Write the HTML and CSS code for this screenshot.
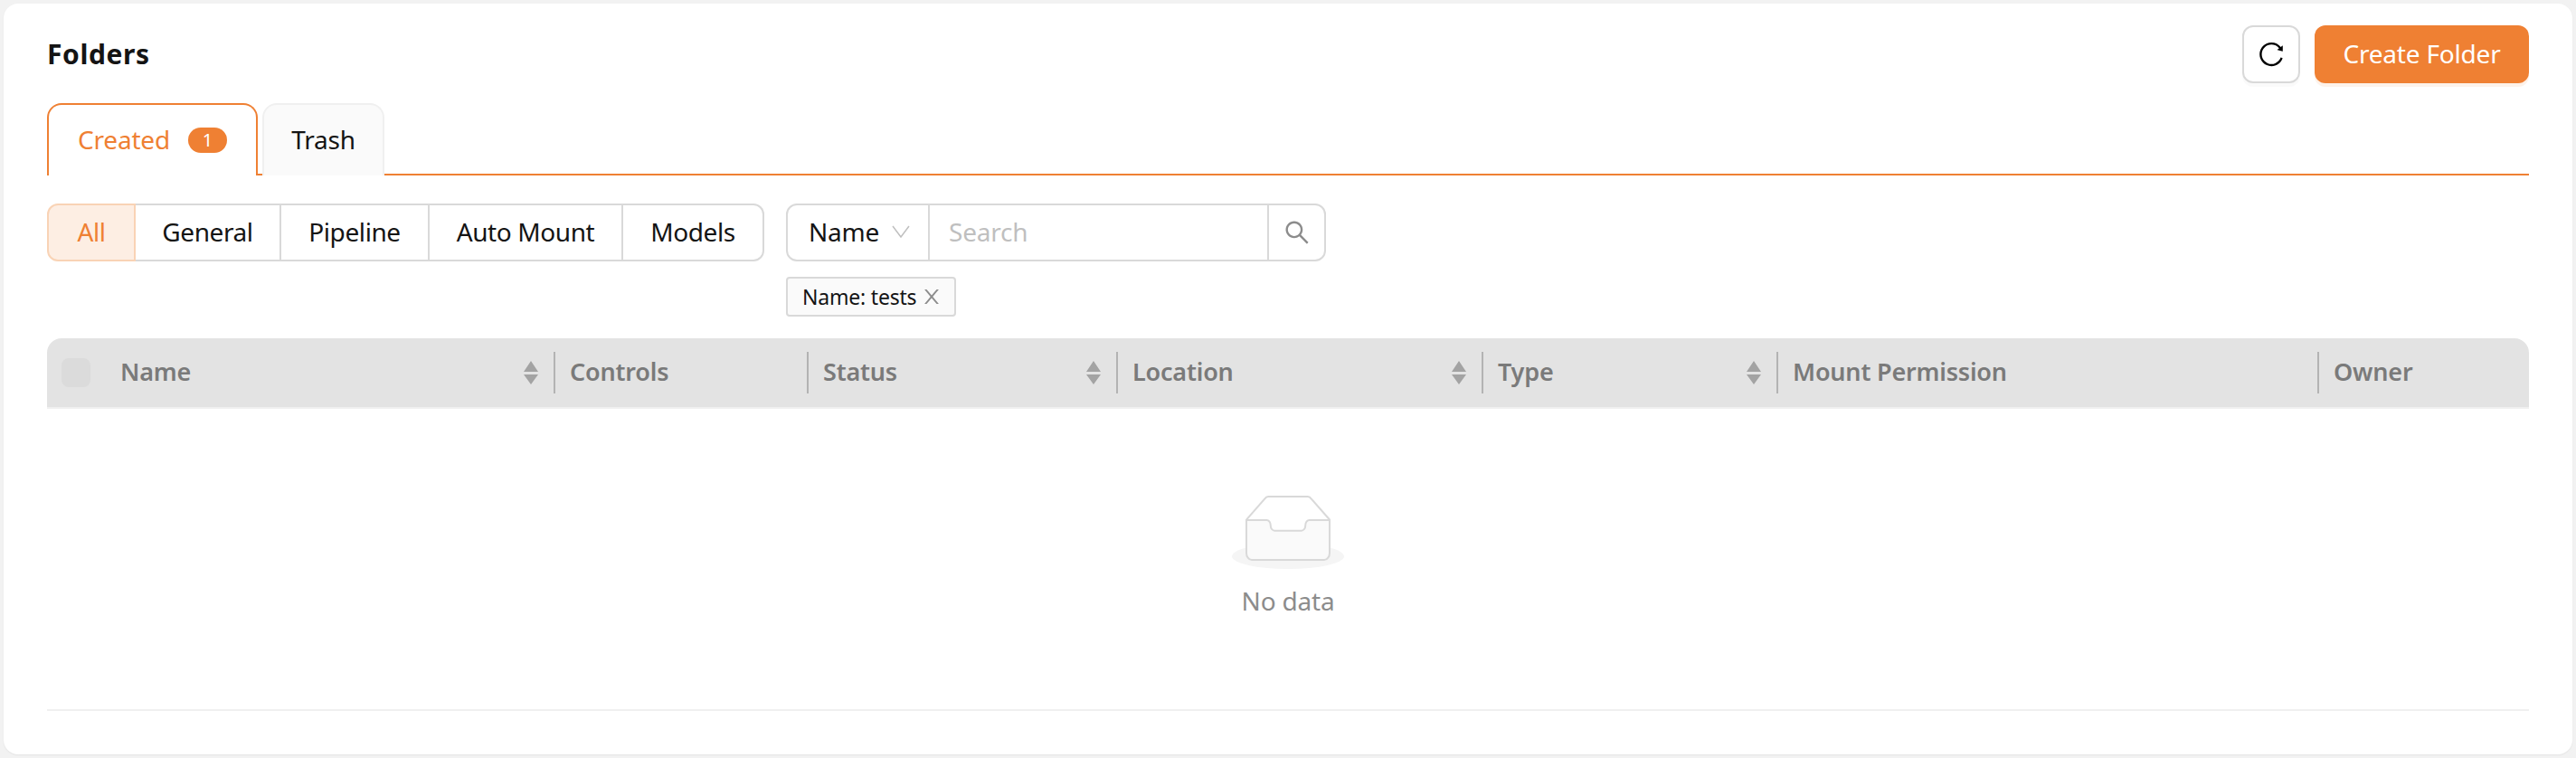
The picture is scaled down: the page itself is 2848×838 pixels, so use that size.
FILE: index.html
```html
<!DOCTYPE html>
<html lang="en">
<head>
  <meta charset="UTF-8">
  <title>Folders</title>
  <link rel="stylesheet" href="styles.css">
</head>
<body>
  <main class="card">
    <header class="top">
      <h1>Folders</h1>
      <div class="actions">
        <button class="btn-icon" type="button" aria-label="Refresh">
          <svg viewBox="64 64 896 896" width="28" height="28"><path d="M909.1 209.3l-56.4 44.1C775.8 155.1 656.2 92 521.9 92 290 92 102.3 279.5 102 511.5 101.7 743.7 289.8 932 521.9 932c181.3 0 335.8-115 394.6-276.1 1.5-4.2-.7-8.9-4.9-10.3l-56.7-19.5a8 8 0 0 0-10.1 4.8c-1.8 5-3.8 10-5.9 14.9-17.3 41-42.1 77.8-73.7 109.4A344.77 344.77 0 0 1 655.9 829c-42.3 17.9-87.4 27-133.8 27-46.5 0-91.5-9.1-133.8-27A341.5 341.5 0 0 1 279 755.2a342.16 342.16 0 0 1-73.7-109.4c-17.9-42.4-27-87.4-27-133.9s9.1-91.5 27-133.9c17.3-41 42.1-77.8 73.7-109.4 31.6-31.6 68.4-56.4 109.3-73.8 42.3-17.9 87.4-27 133.8-27 46.5 0 91.5 9.1 133.8 27a341.5 341.5 0 0 1 109.3 73.8c9.9 9.9 19.2 20.4 27.8 31.4l-60.2 47a8 8 0 0 0 3 14.1l175.6 43c5 1.2 9.9-2.6 9.9-7.7l.8-180.9c-.1-6.6-7.8-10.3-13-6.2z"/></svg>
        </button>
        <button class="btn-primary" type="button">Create Folder</button>
      </div>
    </header>

    <nav class="tabs">
      <a class="tab tab-active">Created <span class="badge">1</span></a>
      <a class="tab tab-trash">Trash</a>
    </nav>

    <section class="filters">
      <div class="segments">
        <span class="seg seg-all seg-active">All</span>
        <span class="seg seg-general">General</span>
        <span class="seg seg-pipeline">Pipeline</span>
        <span class="seg seg-mount">Auto Mount</span>
        <span class="seg seg-models">Models</span>
      </div>
      <div class="search-col">
        <div class="search">
          <div class="search-select">
            <span>Name</span>
            <svg viewBox="0 0 20 14" width="20" height="14"><path d="M1 1l9 12 9-12"/></svg>
          </div>
          <input class="search-input" type="text" placeholder="Search">
          <div class="search-btn">
            <svg viewBox="64 64 896 896" width="28" height="28"><path d="M909.6 854.5L649.9 594.8C690.2 542.7 712 479 712 412c0-80.2-31.3-155.4-87.9-212.1-56.6-56.7-132-87.9-212.1-87.9s-155.5 31.3-212.1 87.9C143.2 256.5 112 331.8 112 412c0 80.1 31.3 155.5 87.9 212.1C256.5 680.8 331.8 712 412 712c67 0 130.6-21.8 182.7-62l259.7 259.6a8.2 8.2 0 0 0 11.6 0l43.6-43.5a8.2 8.2 0 0 0 0-11.6zM570.4 570.4C528 612.7 471.8 636 412 636s-116-23.3-158.4-65.6C211.3 528 188 471.8 188 412s23.3-116.1 65.6-158.4C296 211.3 352.2 188 412 188s116.1 23.2 158.4 65.6S636 352.2 636 412s-23.3 116.1-65.6 158.4z"/></svg>
          </div>
        </div>
        <div class="tag">
          <span>Name: tests</span>
          <svg viewBox="64 64 896 896" width="22" height="22"><path d="M563.8 512l262.5-312.9c4.4-5.2.7-13.1-6.1-13.1h-79.8c-4.7 0-9.2 2.1-12.3 5.7L511.6 449.8 295.1 191.7c-3-3.6-7.5-5.7-12.3-5.7H203c-6.8 0-10.5 7.9-6.1 13.1L459.4 512 196.9 824.9A7.95 7.95 0 0 0 203 838h79.8c4.7 0 9.2-2.1 12.3-5.7l216.5-258.1 216.5 258.1c3 3.6 7.5 5.7 12.3 5.7h79.8c6.8 0 10.5-7.9 6.1-13.1L563.8 512z"/></svg>
        </div>
      </div>
    </section>

    <section class="table">
      <div class="thead">
        <div class="th-check"><span class="checkbox"></span></div>
        <div class="th">Name <svg class="sort" viewBox="0 0 18 26"><path d="M9 0l8 12H1zM9 26L1 15h16z"/></svg></div>
        <div class="th">Controls</div>
        <div class="th">Status <svg class="sort" viewBox="0 0 18 26"><path d="M9 0l8 12H1zM9 26L1 15h16z"/></svg></div>
        <div class="th">Location <svg class="sort" viewBox="0 0 18 26"><path d="M9 0l8 12H1zM9 26L1 15h16z"/></svg></div>
        <div class="th">Type <svg class="sort" viewBox="0 0 18 26"><path d="M9 0l8 12H1zM9 26L1 15h16z"/></svg></div>
        <div class="th">Mount Permission</div>
        <div class="th th-last">Owner</div>
      </div>
      <div class="empty">
        <svg width="128" height="82" viewBox="0 0 64 41">
          <g transform="translate(0 1)" fill="none" fill-rule="evenodd">
            <ellipse fill="#f5f5f5" cx="32" cy="33" rx="31" ry="7"/>
            <g fill-rule="nonzero" stroke="#d9d9d9">
              <path d="M55 12.76L44.854 1.258C44.367.474 43.656 0 42.907 0H21.093c-.749 0-1.46.474-1.947 1.257L9 12.761V22h46v-9.24z"/>
              <path d="M41.613 15.931c0-1.605.994-2.93 2.227-2.931H55v18.137C55 33.26 53.68 35 52.05 35h-40.1C10.32 35 9 33.259 9 31.137V13h11.16c1.233 0 2.227 1.323 2.227 2.928v.022c0 1.605 1.005 2.901 2.237 2.901h14.752c1.232 0 2.237-1.308 2.237-2.913v-.007z" fill="#fafafa"/>
            </g>
          </g>
        </svg>
        <p>No data</p>
      </div>
    </section>
  </main>
</body>
</html>
```

FILE: styles.css
```css
* {
  box-sizing: border-box;
}
html {
  overflow: hidden;
}
body {
  margin: 0;
  padding: 4px;
  height: 838px;
  background-color: #f2f2f2;
  font-family: "Noto Sans", sans-serif;
  font-size: 28px;
  letter-spacing: -0.2px;
  color: #141414;
}
.card {
  height: 830px;
  padding: 24px 48px 0;
  background: #fff;
  border-radius: 16px;
  box-shadow: 0 1px 2px rgba(0, 0, 0, 0.06);
}
.top {
  display: flex;
  justify-content: space-between;
  height: 64px;
}
h1 {
  margin: 0;
  font-size: 30px;
  font-weight: 700;
  line-height: 64px;
  letter-spacing: 0.6px;
}
.actions {
  display: flex;
  gap: 16px;
}
.btn-icon {
  display: flex;
  align-items: center;
  justify-content: center;
  width: 64px;
  height: 64px;
  padding: 0;
  background: #fff;
  border: 2px solid #d9d9d9;
  border-radius: 12px;
  box-shadow: 0 4px 0 rgba(0, 0, 0, 0.02);
}
.btn-primary {
  width: 237px;
  height: 64px;
  padding: 0 0 3px;
  background-color: #ef8033;
  color: #fff;
  border: none;
  border-radius: 12px;
  font-family: inherit;
  font-size: 28px;
  letter-spacing: -0.2px;
  box-shadow: 0 4px 0 rgba(239, 128, 51, 0.1);
}
.tabs {
  display: flex;
  gap: 5px;
  height: 80px;
  margin-top: 22px;
  border-bottom: 2px solid #ef8033;
}
.tab {
  display: flex;
  align-items: center;
  justify-content: center;
  gap: 20px;
  height: 80px;
  padding-bottom: 3px;
  background: #fafafa;
  border: 2px solid #f0f0f0;
  border-bottom: none;
  border-radius: 16px 16px 0 0;
}
.tab-active {
  width: 233px;
  background: #fff;
  color: #ef8033;
  border-color: #ef8033;
}
.tab-trash {
  width: 135px;
}
.badge {
  width: 43px;
  height: 28px;
  margin-top: 3px;
  background-color: #ef8033;
  color: #fff;
  border-radius: 14px;
  font-size: 20px;
  line-height: 28px;
  text-align: center;
}
.filters {
  display: flex;
  gap: 24px;
  margin-top: 31px;
}
.segments {
  display: flex;
  height: 64px;
  letter-spacing: -0.4px;
}
.seg {
  display: flex;
  align-items: center;
  justify-content: center;
  padding-bottom: 2px;
  border: 2px solid #d9d9d9;
  border-left: none;
}
.seg-all {
  width: 98px;
  border-left: 2px solid #f9d3b5;
  border-radius: 12px 0 0 12px;
}
.seg-active {
  background: #fdeee3;
  color: #ef8033;
  border-color: #f9d3b5;
}
.seg-general {
  width: 161px;
}
.seg-pipeline {
  width: 164px;
}
.seg-mount {
  width: 214px;
}
.seg-models {
  width: 156px;
  border-radius: 0 12px 12px 0;
}
.search {
  display: flex;
  width: 597px;
  height: 64px;
  border: 2px solid #d9d9d9;
  border-radius: 12px;
}
.search-select {
  display: flex;
  align-items: center;
  gap: 14px;
  width: 157px;
  padding: 0 0 2px 23px;
  border-right: 2px solid #d9d9d9;
}
.search-select svg {
  fill: none;
  stroke: #bfbfbf;
  stroke-width: 1.5;
}
.search-input {
  flex: 1;
  min-width: 0;
  padding: 0 21px 2px;
  border: none;
  outline: none;
  background: transparent;
  font-family: inherit;
  font-size: 28px;
  letter-spacing: -0.2px;
}
.search-input::placeholder {
  color: #bfbfbf;
}
.search-btn {
  display: flex;
  align-items: center;
  justify-content: center;
  width: 63px;
  border-left: 2px solid #d9d9d9;
}
.search-btn svg {
  fill: #8c8c8c;
}
.tag {
  display: flex;
  align-items: center;
  gap: 6px;
  width: 188px;
  height: 44px;
  margin-top: 17px;
  padding-left: 16px;
  background: #fafafa;
  border: 2px solid #d9d9d9;
  border-radius: 4px;
  font-size: 23px;
}
.tag svg {
  fill: #8c8c8c;
}
.table {
  margin-top: 24px;
}
.thead {
  display: grid;
  grid-template-columns: 66px 496px 280px 342px 404px 326px 598px 232px;
  align-items: center;
  height: 78px;
  background: #e3e3e3;
  border-bottom: 2px solid #f0f0f0;
  border-radius: 16px 16px 0 0;
  color: #7a7a7a;
  font-size: 27px;
  font-weight: 600;
}
.th-check {
  padding-left: 16px;
}
.checkbox {
  display: block;
  width: 32px;
  height: 32px;
  background: #dbdbdb;
  border-radius: 8px;
}
.th {
  display: flex;
  align-items: center;
  justify-content: space-between;
  height: 46px;
  padding: 0 16px 3px;
  border-right: 2px solid #b3b3b3;
}
.th-check + .th {
  padding-left: 15px;
}
.th-last {
  border-right: none;
}
.sort {
  width: 18px;
  height: 26px;
  margin-top: 3px;
  fill: #a3a3a3;
}
.empty {
  display: flex;
  flex-direction: column;
  align-items: center;
  height: 334px;
  padding-top: 95px;
  border-bottom: 2px solid #f0f0f0;
  color: #8c8c8c;
}
.empty p {
  margin: 15px 0 0;
  line-height: 40px;
}
```
